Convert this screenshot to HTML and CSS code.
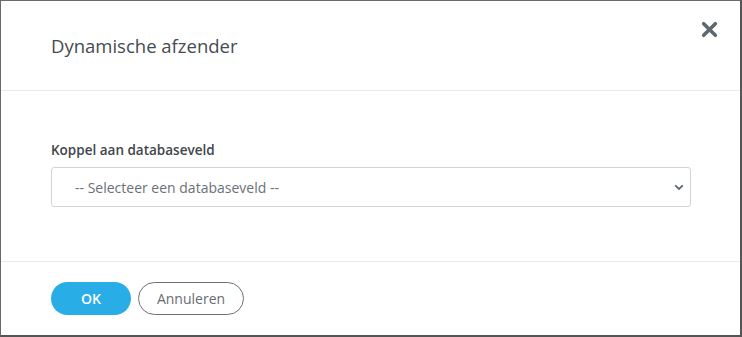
FILE: index.html
```html
<!DOCTYPE html>
<html lang="nl">
<head>
<meta charset="utf-8">
<title>Dynamische afzender</title>
<link rel="stylesheet" href="styles.css">
</head>
<body>
<div class="modal">
  <div class="modal-header">
    <h1 class="modal-title">Dynamische afzender</h1>
    <button class="close" aria-label="Sluiten">
      <svg width="17" height="17" viewBox="0 0 16 16"><path d="M2.5 2.5 L13.5 13.5 M13.5 2.5 L2.5 13.5" stroke="#5e6873" stroke-width="3.4" stroke-linecap="round"/></svg>
    </button>
  </div>
  <div class="modal-body">
    <label class="field-label">Koppel aan databaseveld</label>
    <div class="select">
      <span class="select-text">-- Selecteer een databaseveld --</span>
      <svg class="chevron" width="10" height="7" viewBox="0 0 10 7"><path d="M1.2 1.3 L5 5 L8.8 1.3" fill="none" stroke="#5e6873" stroke-width="1.8"/></svg>
    </div>
  </div>
  <div class="modal-footer">
    <button class="btn btn-primary">OK</button>
    <button class="btn btn-outline">Annuleren</button>
  </div>
</div>
</body>
</html>
```
FILE: styles.css
```css
html, body {
  margin: 0;
  padding: 0;
  background: #ffffff;
}
body {
  font-family: "Open Sans", "Liberation Sans", sans-serif;
}
.modal {
  box-sizing: border-box;
  width: 742px;
  height: 337px;
  border-left: 1px solid #6a6a6a;
  border-top: 1px solid #6a6a6a;
  border-right: 2px solid #555555;
  border-bottom: 2px solid #555555;
  background: #fff;
  display: flex;
  flex-direction: column;
}
.modal-header {
  position: relative;
  height: 89px;
  border-bottom: 1px solid #ebebeb;
  display: flex;
  align-items: center;
  padding: 0 50px;
}
.modal-title {
  margin: 0;
  font-size: 18.5px;
  font-weight: 400;
  color: #454b52;
  line-height: 24px;
}
.close {
  position: absolute;
  right: 22px;
  top: 19px;
  width: 18px;
  height: 18px;
  padding: 0;
  border: 0;
  background: none;
  display: flex;
  align-items: center;
  justify-content: center;
}
.modal-body {
  height: 171px;
  border-bottom: 1px solid #ebebeb;
  padding: 50px 49px 0 50px;
  box-sizing: border-box;
  display: flex;
  flex-direction: column;
}
.field-label {
  font-size: 13.5px;
  font-weight: 600;
  color: #3f454b;
  line-height: 18px;
}
.select {
  margin-top: 8px;
  height: 40px;
  box-sizing: border-box;
  border: 1px solid #d3d3d3;
  border-radius: 3px;
  display: flex;
  align-items: center;
  justify-content: space-between;
  padding: 0 6px 0 23px;
}
.select-text {
  font-size: 14px;
  color: #6b7178;
}
.modal-footer {
  flex: 1;
  display: flex;
  align-items: center;
  gap: 7px;
  padding: 0 50px;
}
.btn {
  height: 33px;
  border-radius: 17px;
  font-family: "Open Sans", "Liberation Sans", sans-serif;
  font-size: 14px;
  padding: 0;
  cursor: pointer;
}
.btn-primary {
  width: 80px;
  background: #29ade6;
  border: 0;
  color: #fff;
  font-weight: 600;
}
.btn-outline {
  width: 106px;
  background: #fff;
  border: 1px solid #6d7176;
  color: #676d73;
}
```
